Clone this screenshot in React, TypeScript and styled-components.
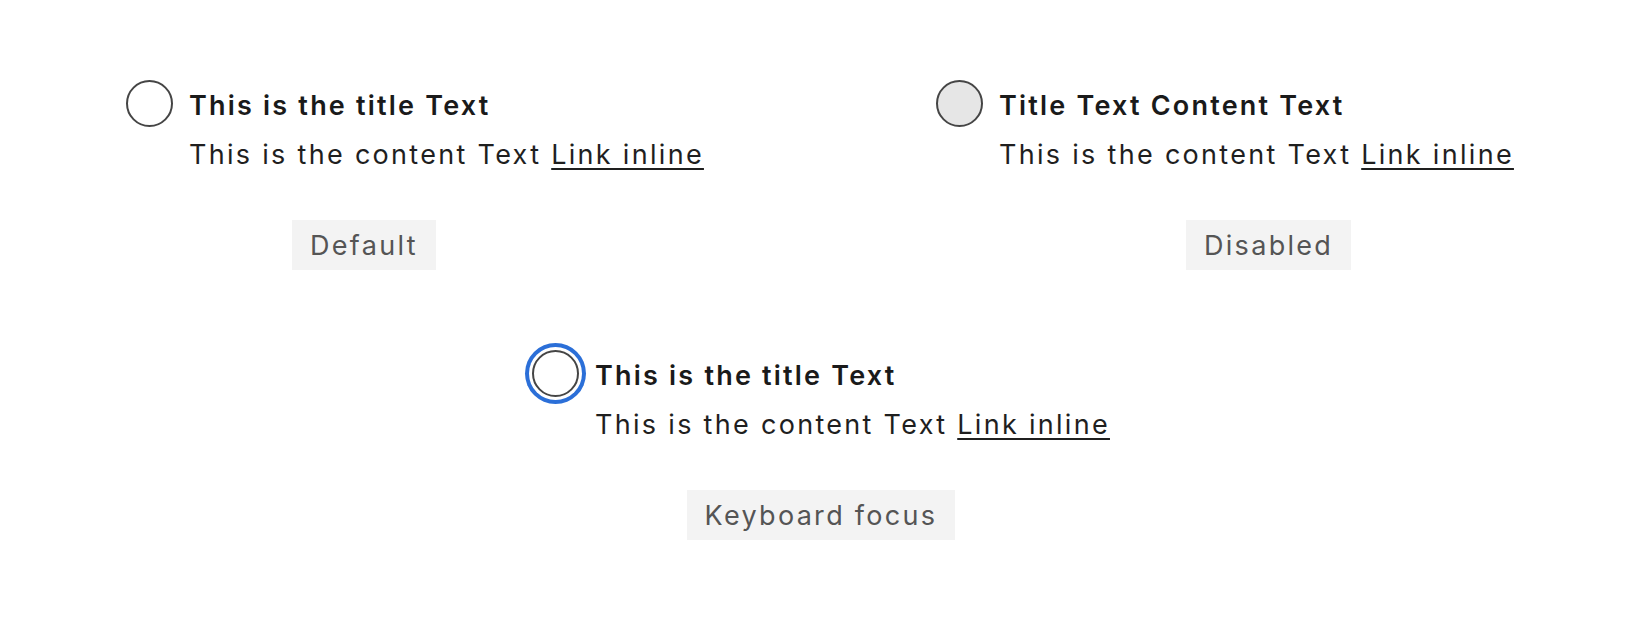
import React from "react";
import styled, { createGlobalStyle, css } from "styled-components";

const GlobalStyle = createGlobalStyle`
  html, body {
    margin: 0;
    padding: 0;
    background: #ffffff;
  }
  body {
    font-family: Inter, "Noto Sans", "Liberation Sans", sans-serif;
    color: #1f1f1f;
  }
`;

const Page = styled.div`
  display: flex;
  flex-direction: column;
  gap: 80px;
  padding-top: 80px;
  width: 1642px;
  height: 620px;
  box-sizing: border-box;
`;

const TopRow = styled.div`
  display: grid;
  grid-template-columns: 810px 1fr;
  padding-left: 126px;
`;

const BottomRow = styled.div`
  display: flex;
  justify-content: center;
`;

const Cell = styled.div<{ $center?: boolean }>`
  display: flex;
  flex-direction: column;
  align-items: ${(p) => (p.$center ? "center" : "flex-start")};
  gap: 40px;
`;

const Item = styled.div`
  display: flex;
  align-items: flex-start;
  gap: 16px;
`;

type RadioState = "default" | "disabled" | "focus";

const Radio = styled.span<{ $state: RadioState }>`
  flex: none;
  width: 47px;
  height: 47px;
  box-sizing: border-box;
  border-radius: 50%;
  border: 2px solid #454545;
  background: #ffffff;
  ${(p) =>
    p.$state === "disabled" &&
    css`
      background: #e6e6e6;
    `}
  ${(p) =>
    p.$state === "focus" &&
    css`
      box-shadow: 0 0 0 3px #ffffff, 0 0 0 7px #2b6fd8;
    `}
`;

const TextBlock = styled.div`
  display: flex;
  flex-direction: column;
  padding-top: 2px;
`;

const Title = styled.div`
  font-size: 27px;
  font-weight: 600;
  line-height: 48px;
  letter-spacing: 2.2px;
  color: #1a1a1a;
  white-space: nowrap;
`;

const Content = styled.div`
  font-size: 27px;
  font-weight: 400;
  line-height: 50px;
  letter-spacing: 2.3px;
  color: #1f1f1f;
  white-space: nowrap;
`;

const InlineLink = styled.a`
  color: inherit;
  text-decoration: underline;
  text-decoration-thickness: 2px;
  text-underline-offset: 4px;
`;

const Label = styled.div<{ $offset?: number }>`
  height: 50px;
  padding: 0 18px;
  box-sizing: border-box;
  display: flex;
  align-items: center;
  background: #f3f3f3;
  color: #555555;
  font-size: 27px;
  letter-spacing: 2.3px;
  margin-left: ${(p) => p.$offset ?? 0}px;
`;

const Choice = ({ state, title }: { state: RadioState; title: string }) => (
  <Item>
    <Radio $state={state} />
    <TextBlock>
      <Title>{title}</Title>
      <Content>
        This is the content Text <InlineLink href="#">Link inline</InlineLink>
      </Content>
    </TextBlock>
  </Item>
);

export default function App() {
  return (
    <>
      <GlobalStyle />
      <Page>
        <TopRow>
          <Cell>
            <Choice state="default" title="This is the title Text" />
            <Label $offset={166}>Default</Label>
          </Cell>
          <Cell>
            <Choice state="disabled" title="Title Text Content Text" />
            <Label $offset={250}>Disabled</Label>
          </Cell>
        </TopRow>
        <BottomRow>
          <Cell $center>
            <Choice state="focus" title="This is the title Text" />
            <Label>Keyboard focus</Label>
          </Cell>
        </BottomRow>
      </Page>
    </>
  );
}
